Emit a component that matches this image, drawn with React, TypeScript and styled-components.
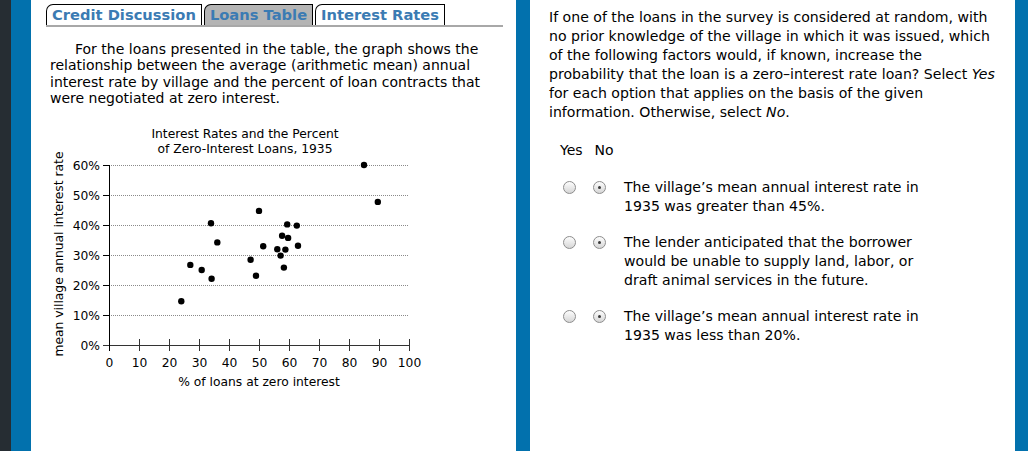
import React from "react";
import styled, { createGlobalStyle } from "styled-components";

const Global = createGlobalStyle`
  html, body { margin: 0; padding: 0; }
  body { background: #262d33; font-family: "DejaVu Sans", Verdana, sans-serif; color: #000; }
`;

const Page = styled.div`
  display: flex;
  gap: 14px;
  width: 1028px;
  height: 451px;
  box-sizing: border-box;
  background: #0271ad;
  border-left: 11px solid #262d33;
  padding: 0 13px 0 20px;
  overflow: hidden;
`;

const Panel = styled.div<{ $pad: string }>`
  flex: 0 0 485px;
  width: 485px;
  background: #fff;
  padding: ${(p) => p.$pad};
  box-sizing: border-box;
  min-width: 0;
`;

const TabBar = styled.div`
  display: flex;
  gap: 2px;
  border-bottom: 2px solid #a8a8a8;
  height: 21px;
`;

const Tab = styled.div<{ $active?: boolean }>`
  border: 1px solid #000;
  border-bottom: none;
  border-top-left-radius: 7px;
  padding: 0 5px 0 5px;
  font-weight: bold;
  font-size: 14.7px;
  line-height: 20px;
  color: #3b7bb3;
  background: ${(p) => (p.$active ? "#b4b4b4" : "#fff")};
`;

const Intro = styled.p`
  margin: 14px 0 0 4px;
  font-size: 14px;
  line-height: 16.4px;
  text-indent: 25px;
`;

const ChartWrap = styled.div`
  margin-top: 14px;
  svg text {
    font-family: "DejaVu Sans", Verdana, sans-serif;
    font-size: 12.3px;
    fill: #000;
  }
`;

const Question = styled.p`
  margin: 0;
  font-size: 14.1px;
  line-height: 19px;
  i { font-style: italic; }
`;

const Header = styled.div`
  display: flex;
  gap: 12px;
  margin: 19px 0 0 11px;
  font-size: 14px;
  line-height: 19px;
`;

const Options = styled.div`
  display: flex;
  flex-direction: column;
  gap: 17px;
  margin-top: 18px;
`;

const OptionRow = styled.div`
  display: flex;
  align-items: flex-start;
  padding-left: 14px;
`;

const Radio = styled.span<{ $dot?: boolean }>`
  position: relative;
  flex: none;
  width: 13px;
  height: 13px;
  box-sizing: border-box;
  margin-top: 3px;
  margin-right: ${(p) => (p.$dot ? "18px" : "17px")};
  border-radius: 50%;
  border: 1px solid #8d8d8d;
  background: linear-gradient(#fdfdfd, #d6d6d6);
  &::after {
    content: "";
    display: ${(p) => (p.$dot ? "block" : "none")};
    position: absolute;
    left: 50%;
    top: 50%;
    width: 3px;
    height: 3px;
    margin: -1.5px 0 0 -1.5px;
    border-radius: 50%;
    background: #3a3a3a;
  }
`;

const OptionText = styled.div`
  width: 300px;
  font-size: 14.1px;
  line-height: 19px;
`;

const points: [number, number][] = [
  [85, 60], [89.6, 47.7], [50, 44.7], [34, 40.6], [59.4, 40.2], [62.6, 39.8],
  [36.1, 34.2], [57.7, 36.4], [59.7, 35.7], [51.4, 32.9], [63, 33.1], [56.1, 31.9],
  [58.8, 31.8], [57.2, 29.8], [47.2, 28.4], [27.1, 26.7], [30.9, 25], [58.3, 25.8],
  [49, 23.1], [34.2, 22.1], [24.1, 14.6],
];

const X0 = 63;
const Y0 = 224;
const sx = (v: number) => X0 + v * 3;
const sy = (v: number) => Y0 - v * 3;

function Chart() {
  const grid = [10, 20, 30, 40, 50, 60];
  const yl = [0, 10, 20, 30, 40, 50, 60];
  const xt = [0, 10, 20, 30, 40, 50, 60, 70, 80, 90, 100];
  return (
    <svg width={420} height={275} viewBox="0 0 420 275">
      <text x={199} y={17} textAnchor="middle">Interest Rates and the Percent</text>
      <text x={199} y={32} textAnchor="middle">of Zero-Interest Loans, 1935</text>
      {grid.map((g) => (
        <line key={g} x1={X0} x2={sx(100)} y1={sy(g) + 0.5} y2={sy(g) + 0.5} stroke="#8a8a8a" strokeWidth={1} strokeDasharray="1 1" />
      ))}
      {yl.map((g) => (
        <g key={g}>
          <line x1={X0 - 6} x2={X0} y1={sy(g) + 0.5} y2={sy(g) + 0.5} stroke="#000" />
          <text x={54} y={sy(g) + 4.5} textAnchor="end">{g}%</text>
        </g>
      ))}
      <line x1={X0 - 6} x2={sx(100)} y1={Y0 + 0.5} y2={Y0 + 0.5} stroke="#333" />
      <line x1={X0 + 0.5} x2={X0 + 0.5} y1={sy(60)} y2={Y0 + 6} stroke="#000" />
      {xt.map((t) => (
        <g key={t}>
          {t > 0 && <line x1={sx(t) + 0.5} x2={sx(t) + 0.5} y1={Y0 - 6} y2={Y0 + 6} stroke="#333" />}
          <text x={sx(t) + 0.5} y={246} textAnchor="middle">{t}</text>
        </g>
      ))}
      <text x={213} y={265} textAnchor="middle">% of loans at zero interest</text>
      <text transform="translate(17 133) rotate(-90)" textAnchor="middle">mean village annual interest rate</text>
      {points.map(([x, y], i) => (
        <circle key={i} cx={sx(x)} cy={sy(y)} r={3.2} fill="#000" />
      ))}
    </svg>
  );
}

const options = [
  "The village\u2019s mean annual interest rate in 1935 was greater than 45%.",
  "The lender anticipated that the borrower would be unable to supply land, labor, or draft animal services in the future.",
  "The village\u2019s mean annual interest rate in 1935 was less than 20%.",
];

export default function App() {
  return (
    <>
      <Global />
      <Page>
        <Panel $pad="4px 13px 0 15px">
          <TabBar>
            <Tab>Credit Discussion</Tab>
            <Tab $active>Loans Table</Tab>
            <Tab>Interest Rates</Tab>
          </TabBar>
          <Intro>
            For the loans presented in the table, the graph shows the relationship between the
            average (arithmetic mean) annual interest rate by village and the percent of loan
            contracts that were negotiated at zero interest.
          </Intro>
          <ChartWrap>
            <Chart />
          </ChartWrap>
        </Panel>
        <Panel $pad="8px 19px 0 19px">
          <Question>
            If one of the loans in the survey is considered at random, with no prior knowledge of
            the village in which it was issued, which of the following factors would, if known,
            increase the probability that the loan is a zero–interest rate loan? Select <i>Yes</i>{" "}
            for each option that applies on the basis of the given information. Otherwise, select{" "}
            <i>No</i>.
          </Question>
          <Header>
            <span>Yes</span>
            <span>No</span>
          </Header>
          <Options>
            {options.map((o) => (
              <OptionRow key={o}>
                <Radio />
                <Radio $dot />
                <OptionText>{o}</OptionText>
              </OptionRow>
            ))}
          </Options>
        </Panel>
      </Page>
    </>
  );
}
